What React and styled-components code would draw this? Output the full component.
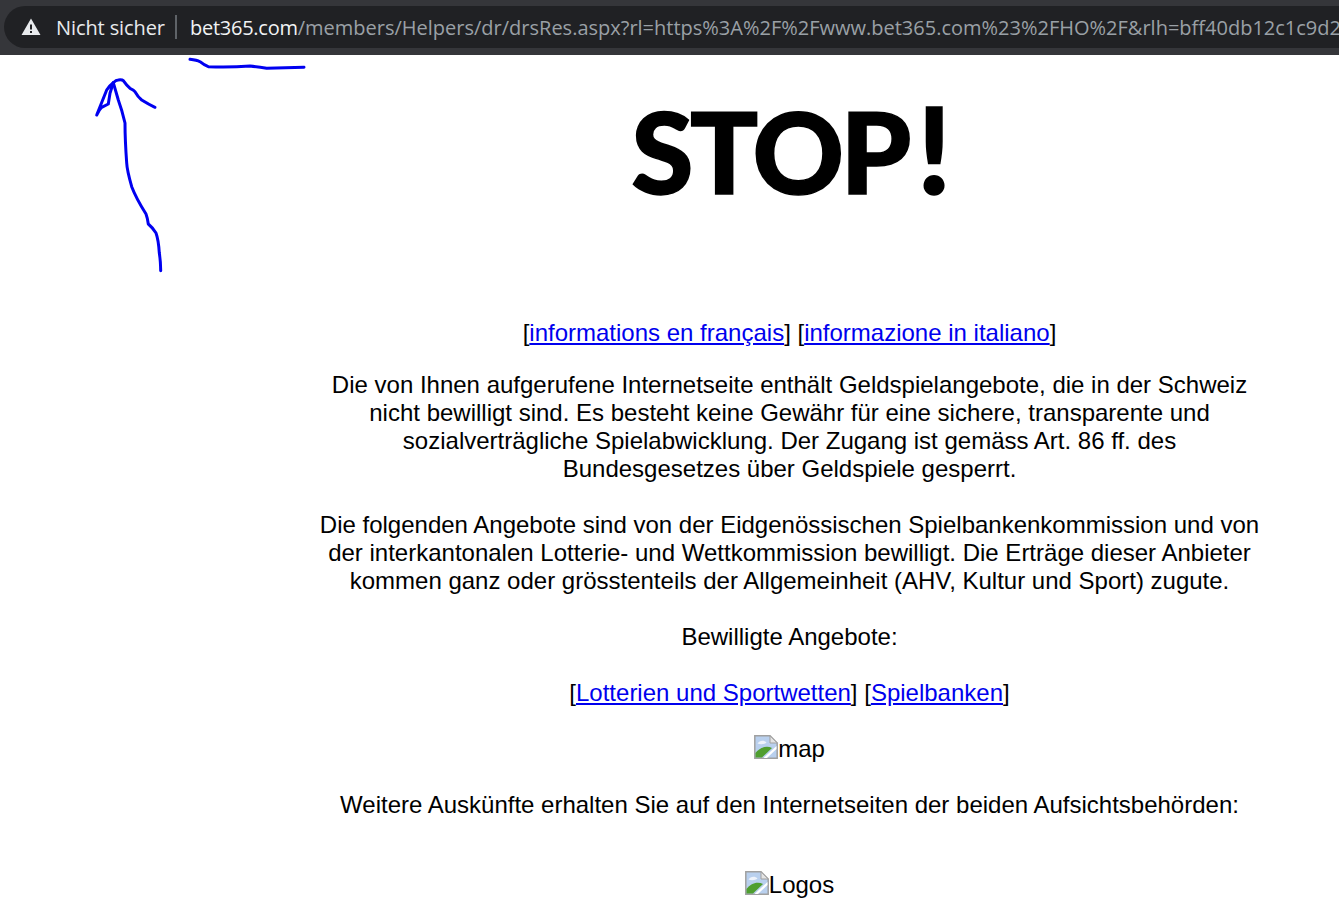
import React from 'react'
import styled, { createGlobalStyle } from 'styled-components'

const GlobalStyle = createGlobalStyle`
  html, body {
    margin: 0;
    padding: 0;
    background: #fff;
    overflow: hidden;
  }
`
const Page = styled.div`
  position: relative;
  width: 1339px;
  height: 912px;
  overflow: hidden;
  font-family: "Liberation Sans", Arial, sans-serif;
  color: #000;
`
const BrowserBar = styled.div`
  height: 55px;
  box-sizing: border-box;
  padding: 6px 0 7px 4px;
  background: #35363a;
  overflow: hidden;
`
const AddressPill = styled.div`
  display: flex;
  align-items: center;
  height: 42px;
  width: 1400px;
  padding-left: 17px;
  border-radius: 21px;
  background: #202124;
  font-family: "Open Sans", "Noto Sans", sans-serif;
  font-size: 20px;
  letter-spacing: -0.1px;
  white-space: nowrap;
`
const SecurityLabel = styled.span`
  margin-left: 15px;
  color: #e8eaed;
`
const Divider = styled.span`
  width: 2px;
  height: 24px;
  margin: 0 13px 0 10px;
  background: #5f6368;
`
const Host = styled.span`
  color: #f1f3f4;
  letter-spacing: -0.25px;
`
const UrlRest = styled.span`
  color: #9aa0a6;
  letter-spacing: 0;
`
const Content = styled.main`
  width: 959px;
  margin-left: 310px;
  text-align: center;
  font-size: 24px;
  line-height: 28px;
`
const Title = styled.h1`
  margin: 27px 0 0;
  height: 137px;
  font-family: Lato, "Open Sans", sans-serif;
  font-weight: 900;
  font-size: 113px;
  line-height: 137px;
  letter-spacing: -3.5px;
  color: #000;
  -webkit-text-stroke: 1.5px #000;
`
const Bang = styled.span`
  margin-left: 9px;
  font-size: 120px;
  line-height: 1;
`
const Paragraph = styled.p`
  margin: ${props => props.$top || 28}px 0 0;
`
const Link = styled.a`
  color: #0000ee;
  text-decoration: underline;
`
const BrokenImage = styled.span`
  display: inline-flex;
  align-items: flex-start;
  height: 28px;
  vertical-align: top;
`
const Annotations = styled.svg`
  position: absolute;
  top: 0;
  left: 0;
  pointer-events: none;
`

const WarningIcon = () => (
  <svg width="20" height="18" viewBox="0 0 20 18">
    <path fill="#e8eaed" fillRule="evenodd" d="M10 0.5 L19.5 17 H0.5 Z M9 6.5 V11.5 H11 V6.5 Z M9 13 V15 H11 V13 Z" />
  </svg>
)

const BrokenIcon = () => (
  <svg width="24" height="24" viewBox="0 0 24 24">
    <path fill="#b9d0ee" stroke="#a0a0a0" strokeWidth="1.5" d="M0.8 0.8 H16 L23.2 8 V23.2 H0.8 Z" />
    <path fill="#eef3fb" d="M3.5 8.5 C5 5.5 10 4.5 12.5 7.5 C10.5 9.5 6 9.5 3.5 8.5 Z" />
    <path fill="#4f9e2f" d="M1.5 22.5 V18 C5 13 12 10 18 13 L8 22.5 Z" />
    <path fill="#fff" d="M9.5 23 L22.5 11 V14 L13 23 Z" />
    <path fill="#e4e4e4" stroke="#a0a0a0" strokeWidth="1" d="M16 0.8 V8 H23.2 Z" />
  </svg>
)

const App = () => (
  <Page>
    <GlobalStyle />
    <BrowserBar>
      <AddressPill>
        <WarningIcon />
        <SecurityLabel>Nicht sicher</SecurityLabel>
        <Divider />
        <Host>bet365.com</Host>
        <UrlRest>/members/Helpers/dr/drsRes.aspx?rl=https%3A%2F%2Fwww.bet365.com%23%2FHO%2F&amp;rlh=bff40db12c1c9d2</UrlRest>
      </AddressPill>
    </BrowserBar>
    <Content>
      <Title>STOP<Bang>!</Bang></Title>
      <Paragraph $top={100}>
        [<Link href="#">informations en français</Link>] [<Link href="#">informazione in italiano</Link>]
      </Paragraph>
      <Paragraph $top={24}>
        Die von Ihnen aufgerufene Internetseite enthält Geldspielangebote, die in der Schweiz<br />
        nicht bewilligt sind. Es besteht keine Gewähr für eine sichere, transparente und<br />
        sozialverträgliche Spielabwicklung. Der Zugang ist gemäss Art. 86 ff. des<br />
        Bundesgesetzes über Geldspiele gesperrt.
      </Paragraph>
      <Paragraph>
        Die folgenden Angebote sind von der Eidgenössischen Spielbankenkommission und von<br />
        der interkantonalen Lotterie- und Wettkommission bewilligt. Die Erträge dieser Anbieter<br />
        kommen ganz oder grösstenteils der Allgemeinheit (AHV, Kultur und Sport) zugute.
      </Paragraph>
      <Paragraph>Bewilligte Angebote:</Paragraph>
      <Paragraph>
        [<Link href="#">Lotterien und Sportwetten</Link>] [<Link href="#">Spielbanken</Link>]
      </Paragraph>
      <Paragraph>
        <BrokenImage><BrokenIcon />map</BrokenImage>
      </Paragraph>
      <Paragraph>Weitere Auskünfte erhalten Sie auf den Internetseiten der beiden Aufsichtsbehörden:</Paragraph>
      <Paragraph $top={52}>
        <BrokenImage><BrokenIcon />Logos</BrokenImage>
      </Paragraph>
    </Content>
    <Annotations width="1339" height="912" viewBox="0 0 1339 912" fill="none" stroke="#0000f0" strokeWidth="3" strokeLinecap="round" strokeLinejoin="round">
      <path d="M190 59.3 Q197 60 200 61.7 Q204 65 208.3 66.7 Q230 67.5 250 66 Q258 67 266.7 68.3 L304 67.3" />
      <path d="M160.7 270.7 Q160.5 260 159.3 253 Q158.5 240 156 233 Q152 227 148.3 224 Q147.5 218 146 214 Q136 198 131.7 186.7 Q127 170 126.7 163 Q125 140 125 123 Q122 110 118.3 100 L113.3 82.7" />
      <path d="M113.3 82.7 Q116 80 118.3 80 Q122 79.5 123.3 80.7 Q127 86 130 88.3 Q134 90 135 91.7 Q138 97 141.7 100 Q148 104 155 107.3" />
      <path d="M113.3 82.7 Q109 86 106.7 90 L96.7 115 Q99 110 101.7 107.3 L108.3 104 L110 93.3 Z" />
    </Annotations>
  </Page>
)

export default App
